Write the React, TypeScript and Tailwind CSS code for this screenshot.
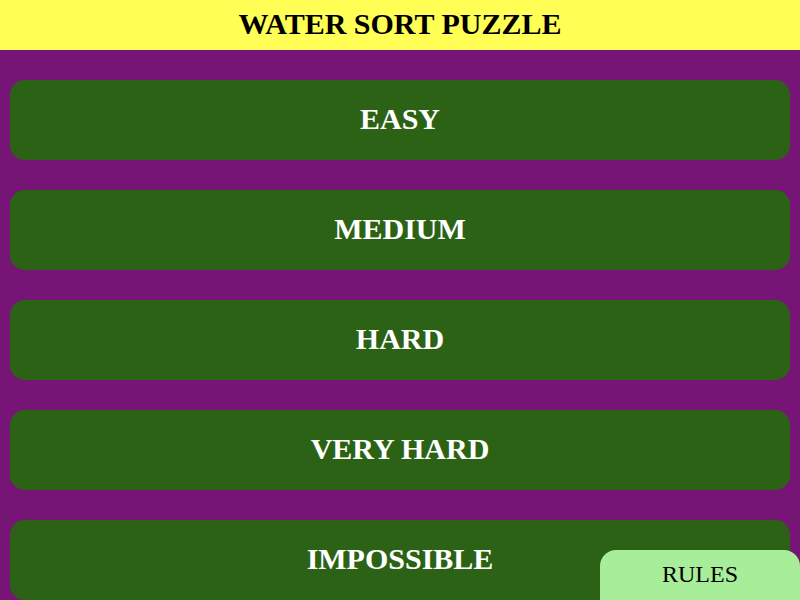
import React from 'react';

const levels = ['EASY', 'MEDIUM', 'HARD', 'VERY HARD', 'IMPOSSIBLE'];

export default function App() {
    return (
        <div className="relative h-[600px] w-full overflow-hidden bg-[#771577] font-['Liberation_Serif',serif]">
            <header className="flex h-[50px] items-center justify-center bg-[#ffff55] pb-[3px]">
                <h1 className="text-[30px] font-bold text-black">WATER SORT PUZZLE</h1>
            </header>
            <div className="flex flex-col gap-[30px] px-[10px] pt-[30px]">
                {levels.map((level) => (
                    <button
                        key={level}
                        className="flex h-[80px] w-full items-center justify-center rounded-[15px] bg-[#2b6216] pb-[3px] text-[30px] font-bold text-white"
                    >
                        {level}
                    </button>
                ))}
            </div>
            <button className="absolute bottom-0 right-0 flex h-[50px] w-[200px] items-center justify-center rounded-t-[16px] bg-[#a8ed9a] pb-[2px] text-[24px] text-black">
                RULES
            </button>
        </div>
    );
}
